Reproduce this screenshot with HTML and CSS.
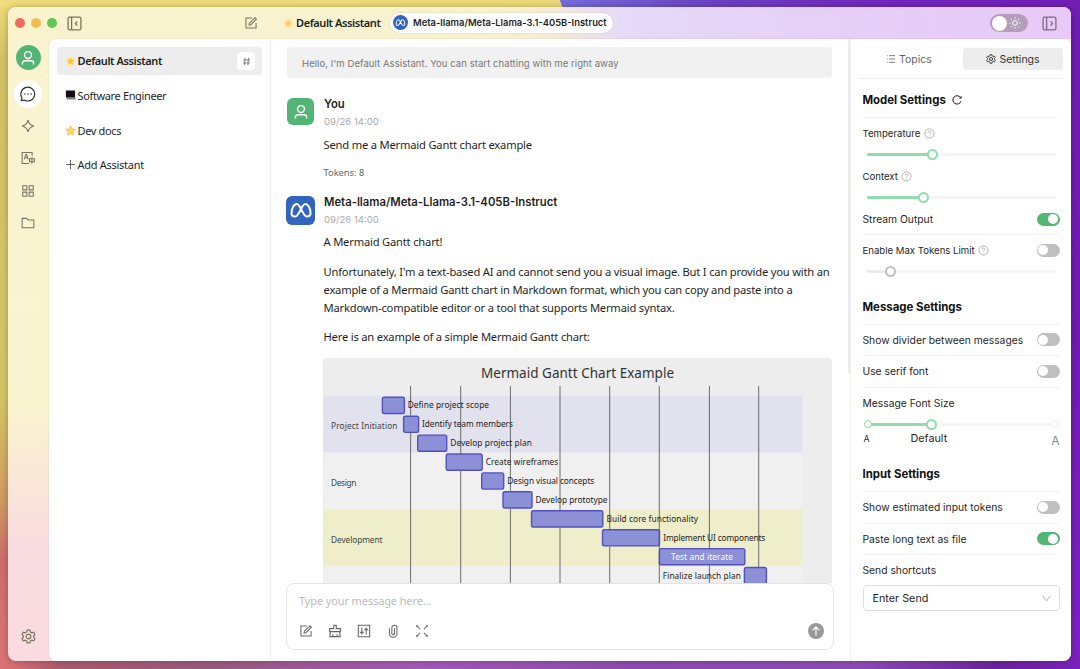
FILE: index.html
```
<!DOCTYPE html>
<html lang="en">
<head>
    <meta charset="UTF-8">
    <meta name="viewport" content="width=device-width, initial-scale=1.0">
    <title>Default Assistant</title>
    <link rel="stylesheet" href="styles.css">
</head>
<body>
<svg class="defs" width="0" height="0">
    <symbol id="i-user" viewBox="0 0 20 20"><circle cx="10" cy="6.3" r="4.3"/><path d="M3 18v-1.5a3 3 0 0 1 3-3h8a3 3 0 0 1 3 3V18"/></symbol>
    <symbol id="i-edit" viewBox="0 0 16 16"><path d="M9 2.2H2.2v11.6h11.6V8"/><path d="M6.2 8.2l6.3-6.3 1.7 1.7-6.3 6.3-2.1.4z"/></symbol>
    <symbol id="i-meta" viewBox="0 0 24 24"><path d="M2.5 15.5C2.5 11 4.600 6 7.800 6c3.900 0 5.800 12.500 9.900 12.500 2.400 0 3.800-1.400 3.800-3.500C21.500 11 19.400 6 16.200 6 12.300 6 10.400 18.500 6.300 18.500c-2.400 0-3.800-1-3.800-3z"/></symbol>
    <symbol id="i-glow" viewBox="0 0 12 12"><path fill="#ffe7a3" d="M6 0l1 2 3-1-.6 2.600L12 5.500 9.800 7.600l.8 3L8 10.300 6 12l-2-1.700-2.600.3.800-3L0 5.500l2.600-1.900L2 1l3 1z"/><path fill="#fbc14a" d="M6 1.400l1.300 2.700 2.900.4-2.100 2 .5 2.900L6 8 3.400 9.400l.5-2.900-2.100-2 2.900-.4z"/></symbol>
    <symbol id="i-star" viewBox="0 0 12 12"><path fill="#fdd466" stroke="#f3b545" stroke-width=".5" d="M6 .4l1.700 3.700 4 .5-2.900 2.800.8 4L6 9.500l-3.600 1.900.8-4L.3 4.600l4-.5z"/></symbol>
    <symbol id="i-gear" viewBox="0 0 16 16"><path d="M6.500 1.200h3l.5 2 1.600.9 2-.6 1.300 2.400L13.500 7.300v1.400l1.400 1.400-1.300 2.400-2-.6-1.600.9-.5 2h-3l-.5-2-1.600-.9-2 .6-1.300-2.400 1.400-1.400V7.300L1.100 5.900l1.300-2.400 2 .6L6 3.200z"/><circle cx="8" cy="8" r="2.500"/></symbol>
    <symbol id="i-help" viewBox="0 0 12 12"><circle cx="6" cy="6" r="5"/><path d="M4.500 4.900c0-2 3-2 3-.2 0 1-1.500 1-1.500 2.200M6 8.200v.9"/></symbol>
</svg>

<div class="window">
    <header class="titlebar">
        <div class="titlebar-left">
            <span class="light red"></span><span class="light orange"></span><span class="light green"></span>
            <svg class="icon panel" viewBox="0 0 14 14"><rect x="1" y="1" width="12" height="12" rx="1.500"/><path d="M4.300 1v12M9.600 5L7.800 7l1.800 2"/></svg>
            <svg class="icon compose"><use href="#i-edit"/></svg>
        </div>
        <div class="titlebar-main">
            <svg class="emoji faded"><use href="#i-glow"/></svg>
            <span class="title">Default Assistant</span>
            <div class="model">
                <span class="model-logo"><svg><use href="#i-meta"/></svg></span>
                <span class="model-name">Meta-llama/Meta-Llama-3.1-405B-Instruct</span>
            </div>
        </div>
        <div class="theme">
            <span></span>
            <svg viewBox="0 0 12 12"><circle cx="6" cy="6" r="2.300"/><path d="M6 .3v1.400M6 10.300v1.400M.3 6h1.400M10.300 6h1.400M2 2l.9.9M9.100 9.100l.9.9M2 10l.9-.9M9.100 2.900L10 2"/></svg>
        </div>
        <svg class="icon panel-right" viewBox="0 0 14 14"><rect x="1" y="1" width="12" height="12" rx="1.500"/><path d="M4.300 1v12M8 5l1.800 2L8 9"/></svg>
    </header>

    <div class="body">
        <nav class="rail">
            <div class="avatar round"><svg><use href="#i-user"/></svg></div>
            <div class="rail-item active">
                <svg viewBox="0 0 16 16"><path d="M1.300 14.600l.6-2.900A6.900 6.900 0 1 1 4.600 14.200z"/><path class="dots" d="M4.800 8h.1M8 8h.1M11.100 8h.1"/></svg>
            </div>
            <div class="rail-item"><svg viewBox="0 0 16 16"><path d="M8 1.200c.9 3.900 2.600 5.900 6.800 6.800C10.600 8.900 8.900 10.900 8 14.800 7.100 10.900 5.400 8.900 1.200 8 5.400 7.100 7.100 5.100 8 1.200z"/></svg></div>
            <div class="rail-item"><svg viewBox="0 0 16 16"><path d="M12.700 5.500V1.700H1.300v12.600h8M3.700 9.500l1.900-5.400h.7l1.800 5.400M4.400 7.600h3.200M12.500 7v7.500M9.700 8.800h5.600v3.400H9.700z"/></svg></div>
            <div class="rail-item"><svg viewBox="0 0 16 16"><path d="M2 2h4.700v4.700H2zM9.300 2H14v4.700H9.300zM2 9.300h4.700V14H2zM9.300 9.300H14V14H9.300z"/></svg></div>
            <div class="rail-item"><svg viewBox="0 0 16 16"><path d="M1.300 2.700h4.900l1.700 1.800h6.800v9H1.300z"/></svg></div>
            <div class="rail-item bottom"><svg><use href="#i-gear"/></svg></div>
        </nav>

        <div class="content">
            <aside class="assistants">
                <div class="assistant selected">
                    <svg class="emoji"><use href="#i-glow"/></svg><span>Default Assistant</span>
                    <i class="hash"><svg viewBox="0 0 10 10"><path d="M3.400 1L2.800 9M7.200 1l-.6 8M1.200 3.300h7.700M1 6.700h7.700"/></svg></i>
                </div>
                <div class="assistant">
                    <svg class="emoji" viewBox="0 0 12 12"><path fill="#111" d="M1 .5h10v7H1z"/><path fill="#777" d="M1 7.500h10l.8 2.500H2z"/><path fill="#bbb" d="M2 10h9.800v1H2.300z"/></svg><span>Software Engineer</span>
                </div>
                <div class="assistant">
                    <svg class="emoji"><use href="#i-star"/></svg><span>Dev docs</span>
                </div>
                <div class="assistant add">
                    <svg class="emoji plus" viewBox="0 0 12 12"><path d="M6 1v10M1 6h10"/></svg><span>Add Assistant</span>
                </div>
            </aside>

            <main class="chat">
                <div class="messages">
                    <div class="greeting"><span>Hello, I'm Default Assistant. You can start chatting with me right away</span></div>

                    <div class="message">
                        <div class="message-head">
                            <div class="avatar"><svg><use href="#i-user"/></svg></div>
                            <div>
                                <div class="name">You</div>
                                <div class="time">09/26 14:00</div>
                            </div>
                        </div>
                        <div class="text"><p>Send me a Mermaid Gantt chart example</p></div>
                        <div class="tokens">Tokens: 8</div>
                    </div>

                    <div class="message">
                        <div class="message-head">
                            <div class="avatar blue"><svg><use href="#i-meta"/></svg></div>
                            <div>
                                <div class="name">Meta-llama/Meta-Llama-3.1-405B-Instruct</div>
                                <div class="time">09/26 14:00</div>
                            </div>
                        </div>
                        <div class="text">
                            <p>A Mermaid Gantt chart!</p>
                            <p>Unfortunately, I'm a text-based AI and cannot send you a visual image. But I can provide you with an<br>example of a Mermaid Gantt chart in Markdown format, which you can copy and paste into a<br>Markdown-compatible editor or a tool that supports Mermaid syntax.</p>
                            <p>Here is an example of a simple Mermaid Gantt chart:</p>
                        </div>
                        <svg class="gantt" viewBox="323 358 509 240">
                            <rect class="sec1" x="323.700" y="396" width="478.700" height="56.700"/>
                            <rect class="sec2" x="323.700" y="452.700" width="478.700" height="56.800"/>
                            <rect class="sec3" x="323.700" y="509.500" width="478.700" height="56.700"/>
                            <rect class="sec2" x="323.700" y="566.200" width="478.700" height="40"/>
                            <g class="bars">
                                <rect x="382.400" y="397.300" width="22" height="16.200" rx="1.800"/>
                                <rect x="403.600" y="416.200" width="15" height="16.200" rx="1.800"/>
                                <rect x="417.700" y="435.100" width="29" height="16.200" rx="1.800"/>
                                <rect x="446.200" y="454" width="36" height="16.200" rx="1.800"/>
                                <rect x="481.700" y="472.900" width="22" height="16.200" rx="1.800"/>
                                <rect x="503" y="491.800" width="29" height="16.200" rx="1.800"/>
                                <rect x="531.500" y="510.800" width="71.300" height="16.200" rx="1.800"/>
                                <rect x="602.500" y="529.700" width="57" height="16.200" rx="1.800"/>
                                <rect x="659.400" y="548.600" width="85.400" height="16.200" rx="1.800"/>
                                <rect x="744.400" y="567.500" width="22" height="16.200" rx="1.800"/>
                            </g>
                            <!-- week lines, broken where a bar covers them -->
                            <path class="grid" d="M410.600 386v29.500M410.600 433v165M460.700 386v67.500M460.700 471v127M510.400 386v105M510.400 508.500V598M560 386v124M560 527.500V598M609.700 386v143M609.700 546.500V598M659.300 386v212M709.400 386v162M709.400 565.500V598M758.700 386v181"/>
                            <text class="chart-title" x="481" y="378" textLength="193">Mermaid Gantt Chart Example</text>
                            <g class="sections">
                                <text x="331" y="429" textLength="66.500">Project Initiation</text>
                                <text x="331" y="485.900" textLength="25.500">Design</text>
                                <text x="331" y="542.700" textLength="51.500">Development</text>
                            </g>
                            <g class="tasks">
                                <text x="407.700" y="408.300" textLength="81.300">Define project scope</text>
                                <text x="422" y="427.200" textLength="91">Identify team members</text>
                                <text x="450.300" y="446.100" textLength="81.500">Develop project plan</text>
                                <text x="485.700" y="465" textLength="72.500">Create wireframes</text>
                                <text x="507.300" y="484" textLength="87">Design visual concepts</text>
                                <text x="535.500" y="502.900" textLength="72">Develop prototype</text>
                                <text x="606.500" y="521.800" textLength="91.500">Build core functionality</text>
                                <text x="663.300" y="540.700" textLength="102">Implement UI components</text>
                                <text x="671" y="559.700" textLength="62" class="inside">Test and iterate</text>
                                <text x="662.800" y="578.600" textLength="78">Finalize launch plan</text>
                            </g>
                        </svg>
                    </div>
                </div>

                <div class="composer">
                    <div class="placeholder">Type your message here...</div>
                    <div class="tools">
                        <svg><use href="#i-edit"/></svg>
                        <svg viewBox="0 0 16 16"><path d="M6.600 5.300V1.500h2.800v3.800h4.800v3.400H1.800V5.300zM2.800 8.700L2 14.400h12l-.8-5.700M5.600 14.400v-2.600M10.400 14.400v-2.600"/></svg>
                        <svg viewBox="0 0 16 16"><path d="M1.500 1.500h13v13h-13zM5.500 4v8M10.500 4v8M4 9.500h3L5.500 11zM9 6.500h3L10.500 5z"/></svg>
                        <svg viewBox="0 0 16 16"><path d="M9.700 4.800v6a1.500 1.500 0 0 1-3 0V4.300a2.900 2.900 0 0 1 5.800 0v6.500a4.300 4.300 0 0 1-8.600 0V4.800"/></svg>
                        <svg viewBox="0 0 16 16"><path d="M2 2l3.800 3.800M14 2l-3.800 3.800M2 14l3.800-3.800M14 14l-3.800-3.800M2 3.500V2h1.500M12.500 2H14v1.500M2 12.500V14h1.500M12.500 14H14v-1.500"/></svg>
                        <span class="send"><svg viewBox="0 0 16 16"><path d="M8 12.500V4M4.500 7.300L8 3.800l3.500 3.500"/></svg></span>
                    </div>
                </div>
            </main>

            <aside class="settings">
                <div class="tabs">
                    <div class="tab"><svg viewBox="0 0 12 12"><path d="M3.800 2H11M3.800 6H11M3.800 10H11M1 2h1M1 6h1M1 10h1"/></svg>Topics</div>
                    <div class="tab on"><svg><use href="#i-gear"/></svg>Settings</div>
                </div>
                <div class="panel-body">
                    <h2 class="first">Model Settings <svg viewBox="0 0 12 12"><path d="M10.300 3.200A5 5 0 1 0 10.800 7.500M10.900 1.500v2.200H8.700"/></svg></h2>
                    <div class="row small">Temperature <svg class="help"><use href="#i-help"/></svg></div>
                    <div class="slider"><span class="fill" style="width: 35%"></span><span class="knob"></span></div>
                    <div class="row small">Context <svg class="help"><use href="#i-help"/></svg></div>
                    <div class="slider"><span class="fill" style="width: 30%"></span><span class="knob"></span></div>
                    <div class="row line stream">Stream Output <i class="switch on"></i></div>
                    <div class="row small">Enable Max Tokens Limit <svg class="help"><use href="#i-help"/></svg><i class="switch"></i></div>
                    <div class="slider off"><span class="fill" style="width: 12.800%"></span><span class="knob"></span></div>

                    <h2>Message Settings</h2>
                    <div class="row line">Show divider between messages <i class="switch"></i></div>
                    <div class="row line">Use serif font <i class="switch"></i></div>
                    <div class="row">Message Font Size</div>
                    <div class="slider stops"><span class="fill" style="width: 33.300%"></span><span class="knob"></span></div>
                    <div class="marks"><span class="a-small">A</span><span class="a-default">Default</span><span class="a-big">A</span></div>

                    <h2>Input Settings</h2>
                    <div class="row line">Show estimated input tokens <i class="switch"></i></div>
                    <div class="row line">Paste long text as file <i class="switch on"></i></div>
                    <div class="row">Send shortcuts</div>
                    <div class="select">Enter Send <svg viewBox="0 0 10 10"><path d="M1 2.200L5 7.800l4-5.600"/></svg></div>
                </div>
            </aside>
        </div>
    </div>
</div>
</body>
</html>
```
FILE: styles.css
```
* {
    box-sizing: border-box;
}
body {
    margin: 0;
    width: 1080px;
    height: 669px;
    padding: 7px 9px 8px 8px;
    overflow: hidden;
    font-family: Inter, "Liberation Sans", sans-serif;
    color: #1f1f1f;
    background:
        linear-gradient(70deg, #efdc7c 0, #ecd978 528px, #756cdb 529px, #6c42c4 670px, #7129bd 820px, #701db5 100%) top / 100% 7px no-repeat,
        linear-gradient(to right, #dc7474 0, #ac596d 60px, #985a7c 200px, #a259b4 420px, #8f4ab1 640px, #8c4bb4 860px, #6c229c 1000px, #7b20bf 100%) bottom / 100% 16px no-repeat,
        linear-gradient(#eedb7c 0, #d4c166 60px, #d4c466 400px, #cf9a63 500px, #cc6c6c 560px, #dc7474 100%) left / 20px 100% no-repeat,
        linear-gradient(#701db5, #7318b5 50%, #7e20c2) #7318b5;
}
svg {
    display: block;
    fill: none;
    stroke: currentColor;
    stroke-width: 1.2;
    flex-shrink: 0;
}
.defs {
    position: absolute;
}
.window {
    height: 654px;
    border-radius: 8px;
    overflow: hidden;
    background: linear-gradient(#f9f3cf 0, #f9f4d0 200px, #faf3d0 400px, #f9e8d6 465px, #f9dde1 540px, #f9dbe0 100%);
    box-shadow: 0 0 6px rgba(0, 0, 0, .25);
}

/* title bar */
.titlebar {
    height: 32px;
    display: flex;
    align-items: center;
    padding-right: 14px;
    background: linear-gradient(80deg, #f8f2cd 0, #faf2cf 480px, #f6ebd5 540px, #e5daf8 610px, #e5d0f7 800px, #e9c9f7 100%);
}
.titlebar-left {
    width: 262px;
    display: flex;
    align-items: center;
    padding: 0 12px 0 7px;
}
.light {
    width: 10px;
    height: 10px;
    margin-right: 6px;
    border-radius: 50%;
}
.red { background: #ec6a5e; }
.orange { background: #f4be4f; }
.green { background: #61c554; }
.icon {
    width: 15px;
    height: 15px;
    color: #777264;
}
.panel {
    margin-left: 4px;
}
.compose {
    margin-left: auto;
    width: 14px;
    height: 14px;
}
.titlebar-main {
    flex: 1;
    display: flex;
    align-items: center;
    padding-left: 13px;
}
.title {
    width: 85px;
    margin: -1px 9px 0 2px;
    font: 600 11px/14px "Noto Sans", sans-serif;
    letter-spacing: -.42px;
    white-space: nowrap;
}
.emoji {
    width: 11px;
    height: 11px;
    stroke: none;
}
.faded {
    opacity: .75;
}
.model {
    height: 20px;
    display: flex;
    align-items: center;
    margin-top: -1px;
    padding: 0 6px 0 3px;
    border-radius: 10px;
    background: #fff;
    box-shadow: 0 0 2px rgba(0, 0, 0, .15);
    font-size: 9.4px;
    font-weight: 600;
}
.model-logo {
    width: 15px;
    height: 15px;
    margin-right: 5px;
    padding: 2px;
    border-radius: 50%;
    background: #3265bd;
    color: #fff;
}
.model-logo svg {
    width: 11px;
    height: 11px;
    stroke-width: 2.2;
}
.theme {
    width: 38px;
    height: 18px;
    display: flex;
    align-items: center;
    justify-content: space-between;
    padding: 0 7px 0 2px;
    margin-right: 14px;
    border-radius: 9px;
    background: #b29dba;
    color: #fff;
}
.theme span {
    width: 15px;
    height: 15px;
    border-radius: 50%;
    background: #fff;
}
.theme svg {
    width: 12px;
    height: 12px;
    stroke-width: 1;
}
.panel-right {
    color: #7b6a84;
}

/* left rail */
.body {
    display: flex;
    height: 622px;
}
.rail {
    width: 41px;
    display: flex;
    flex-direction: column;
    align-items: center;
    padding: 6px 1px 0 0;
    color: #77725f;
}
.avatar {
    width: 27px;
    height: 27px;
    display: flex;
    align-items: center;
    justify-content: center;
    border-radius: 6px;
    background: #53b574;
    color: #fff;
}
.avatar svg {
    width: 16px;
    height: 16px;
    stroke-width: 1.8;
}
.avatar.round {
    width: 25px;
    height: 25px;
    margin-bottom: 10px;
    border-radius: 50%;
}
.avatar.blue {
    width: 29px;
    height: 29px;
    margin: 0 -1px;
    background: #3265bd;
}
.avatar.blue svg {
    width: 24px;
    height: 24px;
    stroke-width: 2;
}
.rail-item {
    width: 28px;
    height: 28px;
    margin-bottom: 4.2px;
    display: flex;
    align-items: center;
    justify-content: center;
    border-radius: 50%;
}
.rail-item svg {
    width: 14px;
    height: 14px;
}
.rail-item.active {
    background: #fff;
    color: #333;
}
.rail-item.active svg {
    width: 16px;
    height: 16px;
}
.dots {
    stroke-linecap: round;
    stroke-width: 1.4;
}
.rail-item.bottom {
    margin: auto 0 11px;
}
.rail-item.bottom svg {
    width: 15px;
    height: 15px;
}

.content {
    flex: 1;
    display: flex;
    border-radius: 7px;
    border-bottom-right-radius: 0;
    overflow: hidden;
    background: #fff;
    box-shadow: 0 0 2px rgba(0, 0, 0, .12);
}

/* assistants */
.assistants {
    width: 222px;
    padding: 8px;
    border-right: 1px solid #f0f0f0;
    font: 11px "Noto Sans", sans-serif;
}
.assistant {
    height: 28px;
    display: flex;
    align-items: center;
    gap: 2px;
    margin-bottom: 6.5px;
    padding: 0 7px 0 7.5px;
    border-radius: 4px;
    letter-spacing: -.36px;
}
.selected {
    background: #ededed;
    font-weight: 600;
    letter-spacing: -.42px;
}
.selected span {
    margin-top: -1px;
}
.hash {
    width: 18px;
    height: 18px;
    margin-left: auto;
    padding: 4.5px;
    border-radius: 4px;
    background: #fff;
}
.hash svg {
    width: 9px;
    height: 9px;
    stroke: #777;
    stroke-width: 1;
}
.add {
    letter-spacing: -.28px;
}
.plus {
    stroke: #555;
    stroke-width: 1;
}

/* chat */
.chat {
    width: 580px;
    display: flex;
    flex-direction: column;
    border-right: 1px solid #f0f0f0;
}
.messages {
    height: 544px;
    overflow: hidden;
    padding: 8px 18px 0 16px;
    background: linear-gradient(#ececec, #ececec) right top / 2px 334px no-repeat;
}
.greeting {
    height: 31px;
    display: flex;
    align-items: center;
    padding: 1px 0 0 15px;
    border-radius: 4px;
    background: #f1f1f1;
    color: #777;
    font-size: 9.5px;
    letter-spacing: .07px;
}
.message {
    padding-top: 20px;
}
.message + .message {
    padding-top: 18px;
}
.message-head {
    display: flex;
    gap: 10px;
    height: 28px;
}
.name {
    font-size: 11.3px;
    font-weight: 600;
    line-height: 13px;
}
.time {
    margin-top: 4px;
    font-size: 9.6px;
    line-height: 13px;
    color: #aaa;
}
.text {
    margin: 9.500px 0 0 36.5px;
    font: 11.2px/18px "Noto Sans", sans-serif;
    white-space: nowrap;
    letter-spacing: -.2px;
}
.text p {
    margin: 0 0 11.400px;
}
.tokens {
    height: 13px;
    padding-top: 1px;
    margin-left: 36.5px;
    font: 9.3px/13px "Noto Sans", sans-serif;
    color: #666;
}
.gantt {
    width: 509px;
    height: 240px;
    margin: 12px 0 0 36px;
    border-radius: 4px 4px 0 0;
    background: #ededed;
    stroke: none;
}
.sec1 { fill: #e2e1ee; }
.sec2 { fill: #f0f0f0; }
.sec3 { fill: #efeecb; }
.grid {
    stroke: #555;
    stroke-width: 1;
    opacity: .85;
}
.bars {
    fill: #8b90d7;
    stroke: #5450bd;
    stroke-width: 1.4;
}
.gantt text {
    font-family: "Noto Sans", sans-serif;
    fill: #222;
}
.gantt .chart-title {
    font-size: 13.5px;
    fill: #333;
}
.sections, .tasks {
    font-size: 8.3px;
}
.gantt .sections text {
    fill: #444;
}
.gantt .tasks .inside {
    fill: #fff;
}

/* message box */
.composer {
    width: 548px;
    height: 67px;
    margin-left: 15px;
    padding: 9px 9px 0 12px;
    border: 1px solid #e3e3e3;
    border-radius: 8px;
    background: #fff;
}
.placeholder {
    font: 11px/15px "Noto Sans", sans-serif;
    letter-spacing: -.12px;
    color: #bbb;
}
.tools {
    height: 16px;
    margin-top: 15px;
    display: flex;
    align-items: center;
    gap: 15px;
    color: #666;
}
.tools > svg {
    width: 14px;
    height: 14px;
}
.send {
    width: 16px;
    height: 16px;
    margin-left: auto;
    border-radius: 50%;
    background: #999;
    color: #fff;
}

/* settings */
.settings {
    flex: 1;
    padding-left: 7px;
}
.tabs {
    width: 205px;
    height: 40px;
    display: flex;
    padding-top: 9px;
    border-bottom: 1px solid #f0f0f0;
    font-size: 10.5px;
    color: #666;
}
.tab {
    width: 102px;
    height: 22px;
    margin-right: 3px;
    display: flex;
    align-items: center;
    justify-content: center;
    gap: 3px;
    border-radius: 3px;
}
.tab.on {
    width: 100px;
    margin: 0;
    background: #ededed;
    color: #333;
}
.tab svg {
    width: 10px;
    height: 10px;
    stroke-width: 1;
}
.tab.on svg {
    stroke-width: 1.5;
}
.panel-body {
    width: 197px;
    margin-left: 4.5px;
}
h2 {
    height: 35px;
    display: flex;
    align-items: center;
    gap: 6px;
    margin: 11.5px 0 0;
    border-bottom: 1px solid #f2f2f2;
    font-size: 11.4px;
    font-weight: 700;
    color: #111;
}
h2.first {
    height: 39px;
    margin: 0;
    padding-top: 3px;
}
h2 svg {
    width: 10px;
    height: 10px;
}
.row {
    height: 30px;
    display: flex;
    align-items: center;
    font-size: 10.3px;
}
.row.small {
    font-size: 9.6px;
}
.row.line {
    height: 31.5px;
    border-bottom: 1px solid #f2f2f2;
}
.row.stream {
    height: 31px;
}
.help {
    width: 11px;
    height: 11px;
    margin-left: 3.5px;
    color: #999;
    stroke-width: .8;
}
.switch {
    width: 23px;
    height: 13px;
    margin-left: auto;
    padding: 1.500px;
    border-radius: 7px;
    background: #bfbfbf;
}
.switch::before {
    content: "";
    display: block;
    width: 10px;
    height: 10px;
    border-radius: 50%;
    background: #fff;
}
.switch.on {
    background: #53b574;
}
.switch.on::before {
    margin-left: auto;
}
.slider {
    height: 13px;
    margin: 0 4px;
    display: flex;
    align-items: center;
    background: linear-gradient(#f4f4f4, #f4f4f4) center / 100% 3px no-repeat;
}
.fill {
    height: 3px;
    border-radius: 2px;
    background: #8fdcac;
}
.knob {
    width: 11px;
    height: 11px;
    margin-left: -5.5px;
    border: 2px solid #8fdcac;
    border-radius: 50%;
    background: #fff;
}
.off .fill {
    background: #ebebeb;
}
.off .knob {
    border-color: #bfbfbf;
}
.stops::before, .stops::after {
    content: "";
    width: 6px;
    height: 6px;
    margin: 0 -3px;
    border: 1.500px solid #8fdcac;
    border-radius: 50%;
    background: #fff;
    z-index: 1;
}
.stops::after {
    margin-left: auto;
    border-color: #eee;
}
.marks {
    height: 15px;
    display: flex;
    align-items: center;
}
.a-small {
    font-size: 9px;
    width: 48px;
    padding-left: 1px;
}
.a-default {
    font-size: 10.8px;
}
.a-big {
    margin: 4px 0 0 auto;
    font-size: 12px;
    color: #888;
}
.select {
    height: 26px;
    display: flex;
    align-items: center;
    justify-content: space-between;
    padding: 0 8px 0 9px;
    border: 1px solid #dedede;
    border-radius: 4px;
    font-size: 10.8px;
}
.select svg {
    width: 9px;
    height: 9px;
    color: #aaa;
    stroke-width: 1;
}
```
